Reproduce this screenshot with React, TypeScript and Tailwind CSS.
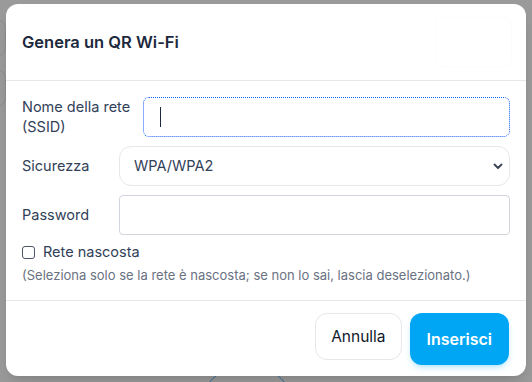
export default function App() {
  return (
    <div className="relative h-[382px] w-[532px] overflow-hidden bg-[#9a9a9a] font-['Inter',sans-serif]">
      {/* page behind the backdrop */}
      <div className="absolute left-[-20px] top-[20px] h-[36px] w-[26px] rounded-lg border border-[#8e8e8e]" />
      <div className="absolute left-[-20px] top-[70px] h-[36px] w-[26px] rounded-lg border border-[#8e8e8e]" />
      <div className="absolute left-[203px] top-[370px] h-[60px] w-[88px] rounded-full border border-[#3a6d93]" />

      <div className="absolute inset-x-[6px] top-[4px] flex h-[372px] flex-col rounded-xl bg-white shadow-lg">
        {/* Header */}
        <div className="flex h-[77px] items-center justify-between border-b border-gray-200 pl-4 pr-[15px]">
          <h2 className="text-[16.5px] font-semibold text-slate-800">Genera un QR Wi-Fi</h2>
          <div className="h-[48px] w-[75px] rounded-md shadow-[0_0_2px_rgba(0,0,0,0.06)]" />
        </div>

        {/* Body */}
        <div className="flex flex-col gap-[9px] border-b border-gray-200 px-4 pb-[16px] pt-[16px]">
          <div className="flex items-start gap-3">
            <label className="w-[109px] text-[14.5px] leading-5 text-slate-700">
              Nome della rete (SSID)
            </label>
            <div className="flex h-[40px] flex-1 items-center rounded-md border border-dotted border-blue-600 px-4">
              <span className="h-[20px] w-px bg-slate-800" />
            </div>
          </div>
          <div className="flex items-center gap-3">
            <label className="w-[85px] text-[14.5px] text-slate-700">Sicurezza</label>
            <div className="flex h-[40px] flex-1 items-center justify-between rounded-xl border border-gray-200 pl-[14px] pr-[5px] text-[14.5px] text-slate-700">
              WPA/WPA2
              <svg width="12" height="12" viewBox="0 0 12 12" fill="none" stroke="#374151" strokeWidth="1.8" strokeLinecap="round" strokeLinejoin="round">
                <path d="M2.5 4.5 6 8l3.5-3.5" />
              </svg>
            </div>
          </div>
          <div className="flex items-center gap-3">
            <label className="w-[85px] text-[14.5px] text-slate-700">Password</label>
            <div className="h-[40px] flex-1 rounded border border-gray-300" />
          </div>
          <div className="flex h-4 items-center gap-2">
            <span className="h-[13px] w-[13px] rounded-[3px] border border-gray-600" />
            <span className="text-[14.5px] leading-4 text-slate-700">Rete nascosta</span>
          </div>
          <p className="-mt-[3px] text-[13px] leading-[18px] text-gray-500">
            (Seleziona solo se la rete è nascosta; se non lo sai, lascia deselezionato.)
          </p>
        </div>

        {/* Footer */}
        <div className="flex flex-1 items-start justify-end gap-2 pr-[17px] pt-[12px]">
          <button className="h-[47px] rounded-xl border border-gray-200 px-[15px] text-[15.5px] text-gray-900">
            Annulla
          </button>
          <button className="h-[52px] rounded-xl bg-sky-500 px-[17px] text-[16px] font-semibold text-white shadow-md shadow-sky-500/20">
            Inserisci
          </button>
        </div>
      </div>
    </div>
  );
}
